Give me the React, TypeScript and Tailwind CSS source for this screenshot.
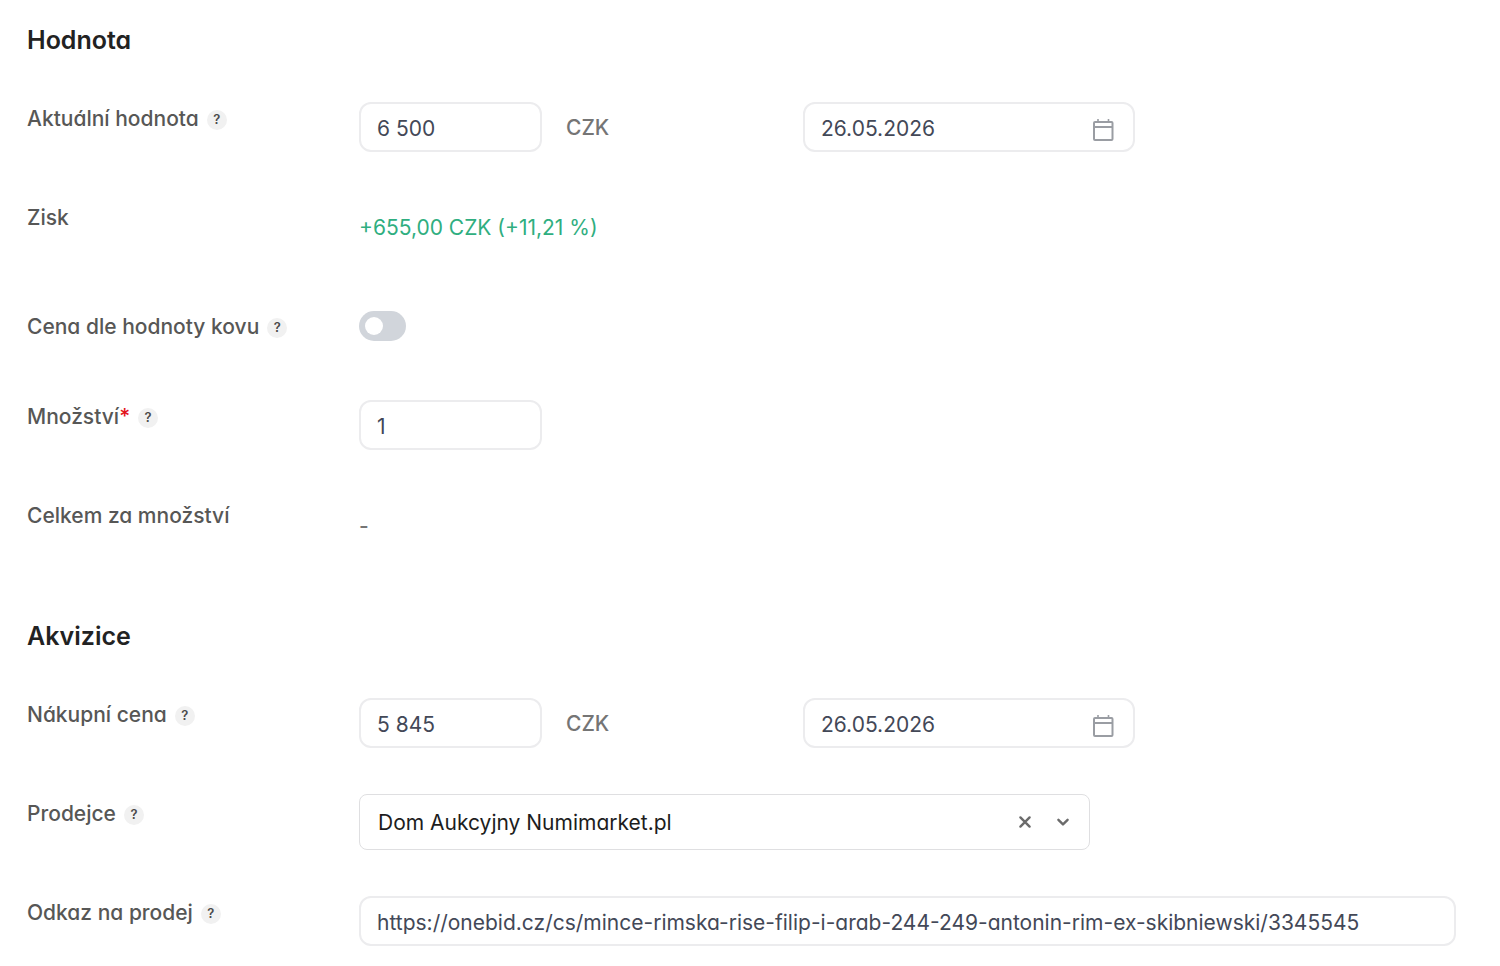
import { useState } from 'react'

const inputClass =
  'h-[50px] w-full rounded-xl border-2 border-[#ececee] bg-white px-4 pt-0.5 text-[21px] text-[#434857] outline-none focus:border-gray-400'

const Help = ({ about }: any) => (
  <button
    type="button"
    aria-label={`Nápověda: ${about}`}
    className="mt-0.5 flex size-5 shrink-0 items-center justify-center rounded-full bg-[#f1f1f1] text-[13px] font-semibold text-[#4a4a4a]"
  >
    ?
  </button>
)

const Row = ({ label, id, help, required, center, children }: any) => {
  const labelClass = 'text-[21px] leading-[34px] font-medium text-[#575756]'
  return (
    <div className={`flex ${center ? 'min-h-[51px] items-center' : 'items-start'}`}>
      <div className={`flex w-[332px] shrink-0 items-center gap-2 ${center ? 'pt-0.5' : ''}`}>
        {id ? (
          <label htmlFor={id} className={labelClass}>
            {label}
            {required && <span className="text-[#e3141c]">*</span>}
          </label>
        ) : (
          <span className={labelClass}>{label}</span>
        )}
        {help && <Help about={label} />}
      </div>
      <div className="flex h-[50px] min-w-0 flex-1 items-center">{children}</div>
    </div>
  )
}

const CalendarIcon = () => (
  <svg width="22" height="24" viewBox="0 0 22 24" fill="none" stroke="#9a9da3" strokeWidth="2">
    <rect x="1" y="4" width="18.5" height="18" rx="1" />
    <path d="M1 9h18.5" />
    <path d="M5 1v3M15.5 1v3" strokeWidth="1.6" />
  </svg>
)

const PriceFields = ({ id, price, date, onPrice, onDate }: any) => (
  <div className="grid w-full grid-cols-[183fr_261fr_332fr_321fr] items-center">
    <input id={id} className={inputClass} value={price} onChange={(e) => onPrice(e.target.value)} />
    <span className="pt-0.5 pl-6 text-[21px] font-medium text-[#757575]">CZK</span>
    <div className="relative">
      <input
        aria-label="Datum"
        className={`${inputClass} pr-14`}
        value={date}
        onChange={(e) => onDate(e.target.value)}
      />
      <button type="button" aria-label="Vybrat datum" className="absolute top-4 right-5">
        <CalendarIcon />
      </button>
    </div>
  </div>
)

const Section = ({ title, children }: any) => (
  <section>
    <h2 className="mb-[46px] text-[25px] leading-8 font-semibold text-[#222222]">{title}</h2>
    <div className="flex flex-col gap-[49px]">{children}</div>
  </section>
)

const App = () => {
  const [form, setForm] = useState({
    value: '6 500',
    valueDate: '26.05.2026',
    byMetal: false,
    quantity: '1',
    price: '5 845',
    priceDate: '26.05.2026',
    seller: 'numimarket',
    link: 'https://onebid.cz/cs/mince-rimska-rise-filip-i-arab-244-249-antonin-rim-ex-skibniewski/3345545',
  })
  const update = (name: string) => (value: any) => setForm({ ...form, [name]: value })

  return (
    <main className="flex flex-col gap-[71px] bg-white pt-6 pr-11 pb-5 pl-[27px] font-['Inter',sans-serif] [font-feature-settings:'cv11']">
      <Section title="Hodnota">
        <Row label="Aktuální hodnota" id="value" help>
          <PriceFields
            id="value"
            price={form.value}
            date={form.valueDate}
            onPrice={update('value')}
            onDate={update('valueDate')}
          />
        </Row>
        <Row label="Zisk">
          <span className="pt-1 text-[21px] text-[#2fae80]">+655,00 CZK (+11,21 %)</span>
        </Row>
        <Row label="Cena dle hodnoty kovu" id="byMetal" help center>
          <input
            id="byMetal"
            type="checkbox"
            role="switch"
            checked={form.byMetal}
            onChange={(e) => update('byMetal')(e.target.checked)}
            className="h-[30px] w-[47px] appearance-none rounded-full bg-[#d1d5db] p-[6px] before:block before:size-[18px] before:rounded-full before:bg-white checked:bg-[#3db488] checked:before:ml-auto"
          />
        </Row>
        <Row label="Množství" id="quantity" help required>
          <div className="w-1/6">
            <input
              id="quantity"
              className={inputClass}
              value={form.quantity}
              onChange={(e) => update('quantity')(e.target.value)}
            />
          </div>
        </Row>
        <Row label="Celkem za množství">
          <span className="pt-1 text-[21px] font-medium text-[#757575]">-</span>
        </Row>
      </Section>

      <Section title="Akvizice">
        <Row label="Nákupní cena" id="price" help>
          <PriceFields
            id="price"
            price={form.price}
            date={form.priceDate}
            onPrice={update('price')}
            onDate={update('priceDate')}
          />
        </Row>
        <Row label="Prodejce" id="seller" help>
          <div className="relative w-2/3">
            <select
              id="seller"
              value={form.seller}
              onChange={(e) => update('seller')(e.target.value)}
              className="block h-14 w-full appearance-none rounded-lg border border-[#dfdfe1] bg-white pt-0.5 pr-24 pl-[18px] text-[21px] text-[#1d1d1d] outline-none"
            >
              <option value=""></option>
              <option value="numimarket">Dom Aukcyjny Numimarket.pl</option>
            </select>
            <div className="pointer-events-none absolute inset-y-0 right-5 flex items-center gap-6">
              <button
                type="button"
                aria-label="Vymazat"
                onClick={() => update('seller')('')}
                className="pointer-events-auto"
              >
                <svg width="14" height="14" viewBox="0 0 14 14" fill="none" stroke="#6b6b6b" strokeWidth="2.4" strokeLinecap="round">
                  <path d="M2.4 2.4l9.2 9.2M11.6 2.4l-9.2 9.2" />
                </svg>
              </button>
              <svg width="14" height="14" viewBox="0 0 14 14" fill="none" stroke="#6b6b6b" strokeWidth="2.4" strokeLinecap="round" strokeLinejoin="round">
                <path d="M2.4 4.8L7 9.4l4.6-4.6" />
              </svg>
            </div>
          </div>
        </Row>
        <Row label="Odkaz na prodej" id="link" help>
          <input
            id="link"
            className={inputClass}
            value={form.link}
            onChange={(e) => update('link')(e.target.value)}
          />
        </Row>
      </Section>
    </main>
  )
}

export default App
